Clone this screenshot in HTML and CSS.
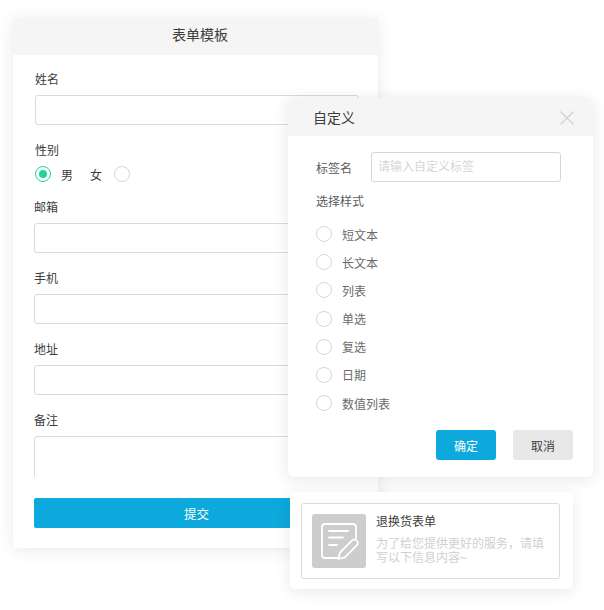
FILE: index.html
```html
<!DOCTYPE html>
<html lang="zh">
<head>
<meta charset="utf-8">
<title>表单模板</title>
<link rel="stylesheet" href="styles.css">
</head>
<body>
<div class="stage">
  <section class="form-card">
    <header class="form-title">表单模板</header>
    <div class="form-body">
      <div class="field field-first"><label class="lbl">姓名</label><div class="input"></div></div>
      <div class="field field-gender">
        <label class="lbl">性别</label>
        <div class="gender">
          <span class="radio radio-on"></span><span class="g-m">男</span><span class="g-f">女</span><span class="radio"></span>
        </div>
      </div>
      <div class="field"><label class="lbl">邮箱</label><div class="input"></div></div>
      <div class="field"><label class="lbl">手机</label><div class="input"></div></div>
      <div class="field"><label class="lbl">地址</label><div class="input"></div></div>
      <div class="field"><label class="lbl">备注</label><div class="textarea"></div></div>
      <button class="submit">提交</button>
    </div>
  </section>

  <section class="dialog">
    <header class="dlg-head">
      <span class="dlg-title">自定义</span>
      <svg class="close" width="16" height="16" viewBox="0 0 16 16"><path d="M1.5 1.5 14.500 14.500M14.500 1.500 1.500 14.500" stroke="#d2d2d2" stroke-width="1.300" fill="none"/></svg>
    </header>
    <div class="dlg-body">
      <div class="tag-row"><span class="tag-lbl">标签名</span><div class="tag-input">请输入自定义标签</div></div>
      <div class="style-lbl">选择样式</div>
      <ul class="opts">
        <li><span class="radio"></span>短文本</li>
        <li><span class="radio"></span>长文本</li>
        <li><span class="radio"></span>列表</li>
        <li><span class="radio"></span>单选</li>
        <li><span class="radio"></span>复选</li>
        <li><span class="radio"></span>日期</li>
        <li><span class="radio"></span>数值列表</li>
      </ul>
      <div class="actions"><button class="btn ok">确定</button><button class="btn cancel">取消</button></div>
    </div>
  </section>

  <section class="promo">
    <div class="promo-in">
      <div class="promo-icon">
        <svg width="54" height="54" viewBox="0 0 54 54" fill="none" stroke="#fff" stroke-width="1.800" stroke-linecap="round" stroke-linejoin="round">
          <path d="M27 44H13a3 3 0 0 1-3-3V13a3 3 0 0 1 3-3h28a3 3 0 0 1 3 3v11"/>
          <path d="M17 17h19M17 23.500h14M17 31h8"/>
          <path d="M26.500 45l1.500-6.500 12.200-12.200a2.800 2.800 0 0 1 4 0l.8.8a2.800 2.800 0 0 1 0 4L32.800 43.300z"/>
        </svg>
      </div>
      <div class="promo-text">
        <div class="promo-title">退换货表单</div>
        <div class="promo-desc">为了给您提供更好的服务，请填写以下信息内容~</div>
      </div>
    </div>
  </section>
</div>
</body>
</html>
```
FILE: styles.css
```css
* { box-sizing: border-box; }
html, body { margin: 0; padding: 0; background: #fff; }
body { font-family: "Liberation Sans", "Noto Sans CJK SC", sans-serif; color: #333; overflow: hidden; }
.stage { position: relative; width: 604px; height: 610px; padding: 18px 0 0 13px; }

.form-card { width: 365px; height: 530px; background: #fff; box-shadow: 0 2px 16px rgba(0,0,0,.09); }
.form-title { height: 37px; line-height: 34px; padding-left: 9px; background: #f5f5f5; text-align: center; font-size: 14px; color: #3c3c3c; }
.form-body { padding: 0 19px 0 21px; }
.lbl { display: block; font-size: 12px; line-height: 18px; color: #3c3c3c; }
.field { padding-top: 17px; }
.field-first { padding-top: 16px; margin-left: 1px; }
.field-gender { margin-left: 1px; }
.input { width: 100%; height: 30px; margin-top: 6px; border: 1px solid #dadada; border-radius: 3px; background: #fff; }
.textarea { height: 41px; margin-top: 6px; border: 1px solid #dadada; border-bottom: 0; border-radius: 3px 3px 0 0; }
.gender { display: flex; align-items: center; height: 16px; margin-top: 6px; font-size: 12px; color: #3c3c3c; }
.g-m { margin-left: 10px; }
.g-f { margin-left: 17px; margin-right: 12px; }
.radio { flex: none; display: inline-block; width: 16px; height: 16px; border: 1px solid #d6d6d6; border-radius: 50%; background: #fff; }
.radio-on { border-color: #1ed69a; position: relative; }
.radio-on::after { content: ""; position: absolute; left: 3px; top: 3px; width: 8px; height: 8px; border-radius: 50%; background: #1ed69a; }
.submit { display: block; width: 100%; height: 30px; margin-top: 21px; border: 0; border-radius: 2px; background: #0da8dc; color: #fff; font: inherit; font-size: 12.500px; }

.dialog { position: absolute; left: 288px; top: 98px; width: 305px; height: 379px; background: #fff; border-radius: 6px; box-shadow: 0 2px 16px rgba(0,0,0,.1); overflow: hidden; }
.dlg-head { display: flex; align-items: center; justify-content: space-between; height: 38px; padding: 0 18px 0 25px; background: #f5f5f5; }
.dlg-title { font-size: 14px; color: #3c3c3c; }
.close { display: block; margin-top: 2px; }
.dlg-body { padding: 16px 20px 0 28px; font-size: 12px; }
.tag-row { display: flex; align-items: center; }
.tag-lbl { width: 55px; color: #5a5a5a; }
.tag-input { width: 190px; height: 30px; line-height: 28px; padding-left: 6px; border: 1px solid #d6d6d6; border-radius: 3px; color: #d6d6d6; }
.style-lbl { margin-top: 11px; line-height: 18px; color: #5a5a5a; }
.opts { list-style: none; margin: 9px 0 0; padding: 0; }
.opts li { display: flex; align-items: center; gap: 10px; height: 28.170px; color: #6a6a6a; }
.actions { display: flex; gap: 17px; margin: 13px 0 0 120px; }
.btn { width: 60px; height: 30px; border: 0; border-radius: 3px; font: inherit; font-size: 12px; }
.ok { background: #0da8dc; color: #fff; }
.cancel { background: #e8e8e8; color: #3c3c3c; }

.promo { position: absolute; left: 290px; top: 492px; width: 283px; height: 97px; padding: 11px 13px 10px 11px; background: #fff; border-radius: 5px; box-shadow: 0 3px 16px rgba(0,0,0,.09); }
.promo-in { display: flex; height: 76px; padding: 10px 10px 0; border: 1px solid #dcdcdc; border-radius: 3px; }
.promo-icon { flex: none; width: 54px; height: 54px; border-radius: 3px; background: #cdcdcd; }
.promo-icon svg { display: block; }
.promo-text { margin-left: 10px; }
.promo-title { font-size: 12px; line-height: 16px; color: #3c3c3c; }
.promo-desc { margin-top: 7px; width: 172px; font-size: 12px; line-height: 14px; color: #d0d0d0; }
```
